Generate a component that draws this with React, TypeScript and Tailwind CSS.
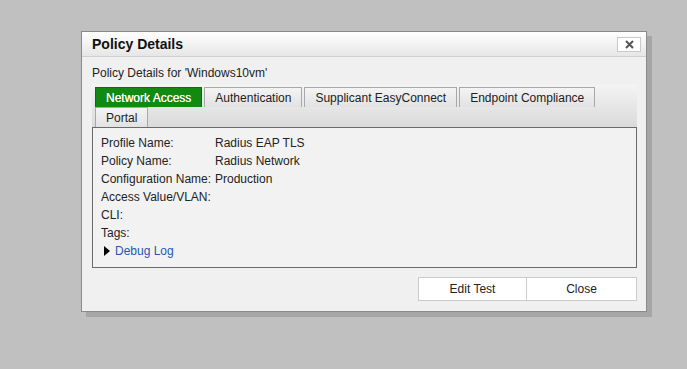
import React from "react";

const rows: [string, string][] = [
  ["Profile Name:", "Radius EAP TLS"],
  ["Policy Name:", "Radius Network"],
  ["Configuration Name:", "Production"],
  ["Access Value/VLAN:", ""],
  ["CLI:", ""],
  ["Tags:", ""],
];

const tabs = ["Network Access", "Authentication", "Supplicant EasyConnect", "Endpoint Compliance", "Portal"];

export default function App() {
  return (
    <div
      className="w-[687px] h-[369px] bg-[#c0c0c0] pl-[81px] pt-[31px] overflow-hidden"
      style={{ fontFamily: '"Liberation Sans", Arial, sans-serif' }}
    >
      <div className="w-[566px] h-[281px] bg-[#f0f0f0] border border-[#8a8a8a] shadow-[5px_5px_0_#a6a6a6] flex flex-col">
        <div className="h-[25px] flex items-center justify-between pl-[10px] pr-[5px] bg-gradient-to-b from-[#ffffff] to-[#e6e6e6] border-b border-[#cfcfcf] shrink-0">
          <span className="text-[14px] font-bold text-[#111]">Policy Details</span>
          <div className="w-[24px] h-[15px] bg-white border border-[#c8c8c8] flex items-center justify-center">
            <svg width="9" height="9" viewBox="0 0 9 9">
              <path d="M1 1L8 8M8 1L1 8" stroke="#555" strokeWidth="2" />
            </svg>
          </div>
        </div>
        <div className="px-[10px] pt-[9px] flex flex-col">
          <div className="text-[12px] text-[#222] leading-[14px]">Policy Details for 'Windows10vm'</div>
          <div className="mt-[4px] w-[545px] bg-gradient-to-b from-[#f4f4f4] to-[#dadada] pt-[3px] pl-[3px] pr-[40px] flex flex-wrap gap-x-[2px]">
            {tabs.map((t, i) =>
              i === 0 ? (
                <div
                  key={t}
                  className="h-[20px] px-[10px] flex items-center text-[12px] text-white bg-[#128a12] border border-[#0d6d0d] border-b-0 [text-shadow:0_0_0.4px_#fff]"
                >
                  {t}
                </div>
              ) : (
                <div
                  key={t}
                  className="h-[20px] px-[10px] flex items-center text-[12px] text-[#222] bg-gradient-to-b from-[#f4f4f4] to-[#e2e2e2] border border-[#a8a8a8] border-b-0"
                >
                  {t}
                </div>
              )
            )}
          </div>
          <div className="w-[545px] h-[141px] border border-[#6a6a6a] bg-[#f2f2f2] pl-[8px] pt-[6px]">
            {rows.map(([k, v]) => (
              <div key={k} className="flex h-[18px] items-center text-[12px] text-[#222]">
                <span className="w-[114px] shrink-0">{k}</span>
                <span>{v}</span>
              </div>
            ))}
            <div className="flex h-[18px] items-center text-[12px] text-[#2457b0]">
              <svg width="6" height="10" viewBox="0 0 6 10" className="ml-[3px] mr-[5px]">
                <path d="M0 0L6 5L0 10Z" fill="#000" />
              </svg>
              <span>Debug Log</span>
            </div>
          </div>
          <div className="flex justify-end mt-[9px] w-[545px]">
            <div className="w-[109px] h-[24px] bg-white border border-[#cccccc] flex items-center justify-center text-[12px] text-[#222]">
              Edit Test
            </div>
            <div className="w-[110px] h-[24px] bg-white border border-[#cccccc] border-l-0 flex items-center justify-center text-[12px] text-[#222]">
              Close
            </div>
          </div>
        </div>
      </div>
    </div>
  );
}
